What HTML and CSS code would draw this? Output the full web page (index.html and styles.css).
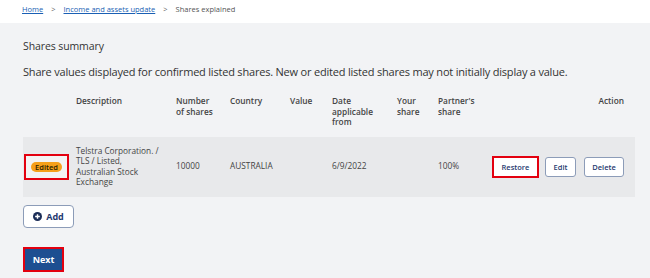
FILE: index.html
```html
<!DOCTYPE html>
<html lang="en">
<head>
  <meta charset="UTF-8">
  <title>Shares explained</title>
  <link rel="stylesheet" href="styles.css">
</head>
<body>
  <div class="crumbs">
    <a href="#">Home</a><span class="sep">&gt;</span><a href="#">Income and assets update</a><span class="sep">&gt;</span><span>Shares explained</span>
  </div>

  <div class="main">
    <h2>Shares summary</h2>
    <p class="intro">Share values displayed for confirmed listed shares. New or edited listed shares may not initially display a value.</p>

    <table class="shares">
      <colgroup>
        <col style="width:47px"><col style="width:100px"><col style="width:54px"><col style="width:60px">
        <col style="width:42px"><col style="width:65px"><col style="width:41px"><col style="width:53px"><col style="width:150px">
      </colgroup>
      <thead>
        <tr>
          <th></th>
          <th>Description</th>
          <th>Number of shares</th>
          <th>Country</th>
          <th>Value</th>
          <th>Date applicable from</th>
          <th>Your share</th>
          <th>Partner's share</th>
          <th class="act">Action</th>
        </tr>
      </thead>
      <tbody>
        <tr>
          <td class="badge-cell"><span class="mark"><span class="badge">Edited</span></span></td>
          <td class="desc">Telstra&nbsp;Corporation.&nbsp;/ TLS / Listed, Australian Stock Exchange</td>
          <td>10000</td>
          <td>AUSTRALIA</td>
          <td></td>
          <td>6/9/2022</td>
          <td></td>
          <td>100%</td>
          <td class="act">
            <button class="btn hl">Restore</button><button class="btn">Edit</button><button class="btn">Delete</button>
          </td>
        </tr>
      </tbody>
    </table>

    <button class="btn add">
      <svg width="9" height="9" viewBox="0 0 10 10"><circle cx="5" cy="5" r="5" fill="#1b2d57"/><path d="M5 2.4v5.2M2.4 5h5.2" stroke="#fff" stroke-width="1.6"/></svg>
      Add
    </button>

    <div>
      <button class="next">Next</button>
    </div>
  </div>
</body>
</html>
```

FILE: styles.css
```css
body {
  margin: 0;
  font-family: 'Open Sans', sans-serif;
  color: #3a3a3a;
  background: #f2f3f5;
}

.crumbs {
  background: #fff;
  height: 23px;
  box-sizing: border-box;
  padding: 4px 0 0 22px;
  font-size: 7.5px;
  line-height: 10px;
  color: #555;
}
.crumbs a {
  color: #1a5fb4;
}
.crumbs .sep {
  margin: 0 8px;
  color: #666;
}

.main {
  padding: 15px 0 0 23px;
}

h2 {
  margin: 0;
  font-size: 10.5px;
  line-height: 16px;
  font-weight: 400;
  letter-spacing: -0.1px;
  color: #333;
}

.intro {
  margin: 9px 0 0;
  font-size: 11px;
  line-height: 18px;
  letter-spacing: -0.2px;
  color: #333;
}

.shares {
  margin-top: 15px;
  border-collapse: collapse;
  table-layout: fixed;
  width: 612px;
  font-size: 8.3px;
  line-height: 10.5px;
}
.shares th {
  text-align: left;
  vertical-align: top;
  font-weight: 600;
  color: #444;
  padding: 0 6px 9px;
}
.shares td {
  background: #e8e9eb;
  padding: 0 6px;
  height: 60px;
  vertical-align: middle;
  color: #444;
}
.shares td.desc {
  padding-right: 14px;
}
.shares .act {
  text-align: right;
  padding-right: 11px;
  white-space: nowrap;
}
.shares .badge-cell {
  padding: 0;
  text-align: center;
}

.mark {
  display: inline-block;
  border: 2px solid #e3000f;
  background: #f3f3f3;
  padding: 6px 5px;
  line-height: 0;
}
.badge {
  display: inline-block;
  background: #f5a01a;
  color: #2b2100;
  font-weight: 600;
  font-size: 7.5px;
  line-height: 10px;
  padding: 0 4px;
  border-radius: 6px;
}

.btn {
  font-family: inherit;
  background: #fff;
  border: 1px solid #8c9cb8;
  border-radius: 3px;
  color: #1f3a70;
  font-size: 7.5px;
  font-weight: 600;
  height: 20px;
  padding: 0;
  margin-left: 8px;
  vertical-align: middle;
}
.act .btn { width: 31px; }
.act .btn:last-child { width: 40px; }
.act .btn.hl {
  border: 2px solid #e3000f;
  border-radius: 0;
  height: 22px;
  width: 47px;
  margin-left: 0;
  margin-right: -2px;
}

.add {
  margin: 8px 0 0;
  height: 23px;
  width: 51px;
  padding: 0;
  font-size: 9px;
  font-weight: 700;
  border-radius: 4px;
  display: inline-flex;
  align-items: center;
  justify-content: center;
  gap: 4px;
}

.next {
  margin-top: 19px;
  font-family: inherit;
  background: #1d4f91;
  color: #fff;
  border: 2px solid #e3000f;
  font-size: 9px;
  font-weight: 700;
  height: 25px;
  width: 41px;
  padding: 0;
}
```
